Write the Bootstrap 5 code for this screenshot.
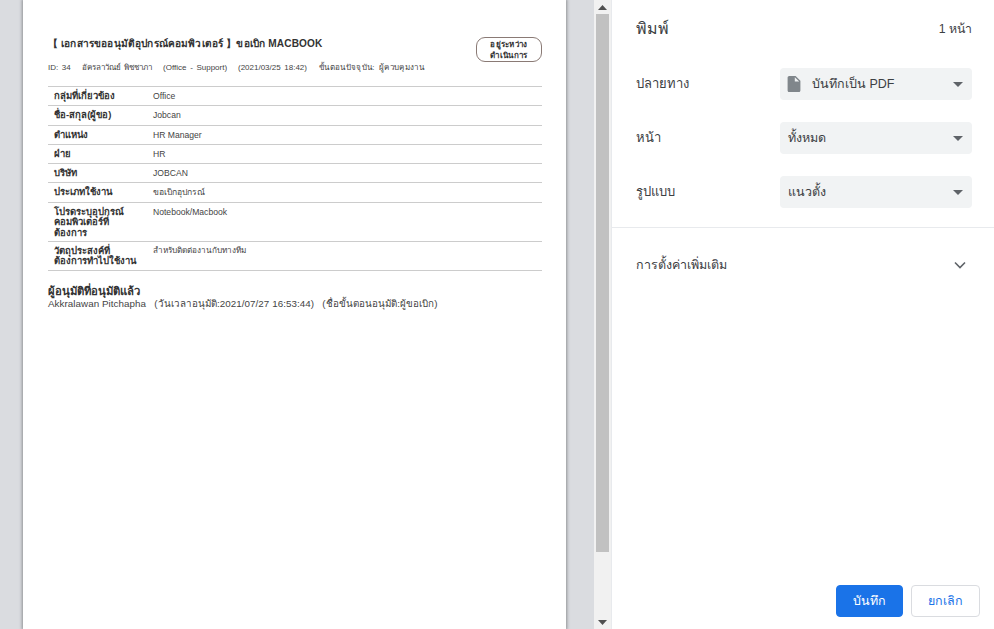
<!DOCTYPE html>
<html lang="th">
<head>
    <meta charset="UTF-8">
    <meta name="viewport" content="width=device-width, initial-scale=1.0">
    <title>Print preview</title>
    <link href="https://cdn.jsdelivr.net/npm/bootstrap@5.3.0/dist/css/bootstrap.min.css" rel="stylesheet">
    <style>
        html, body { height: 629px; overflow: hidden; }
        body { font-family: "Liberation Sans", "Noto Sans", sans-serif; background: #fff; color: #202124; }
        .print-shell { height: 629px; }
        .preview-area { width: 594px; background: #dadce0; padding-left: 23px; }
        .paper { width: 543px; height: 629px; background: #fff; box-shadow: 0 0 3px 1px #8f9094; padding: 33px 24px 0 25px; color: #333; }
        .doc-title { font-size: 10.100px; font-weight: 700; line-height: 14px; margin: 0; letter-spacing: .16px; color: #333; }
        .state-tag { width: 66px; height: 25px; border: 1px solid #8a7a75; border-radius: 9px; font-size: 8px; font-weight: 700; line-height: 11px; text-align: center; padding-top: 1px; letter-spacing: .3px; }
        .doc-meta { font-size: 8px; line-height: 12px; height: 12px; word-spacing: 1.400px; color: #444; }
        .step-now { letter-spacing: .35px; margin-left: 1px; }
        .doc-table { width: 494px; margin: 12px 0 0; border-top: 1px solid #ccc; font-size: 8.600px; color: #444; }
        .doc-table th, .doc-table td { padding: 4px 6px 3px; border-bottom: 1px solid #ccc; line-height: 10.400px; vertical-align: top; height: 19.300px; }
        .doc-table th { width: 99px; font-weight: 700; font-size: 9.500px; color: #333; }
        .note-text { font-size: 8.200px; }
        .approved-title { font-size: 11.300px; font-weight: 700; line-height: 13px; margin: 14px 0 0; color: #333; }
        .approved-line { font-size: 9.800px; line-height: 12px; letter-spacing: .05px; color: #444; }
        .scroll-track { width: 17px; background: #f1f1f1; }
        .scroll-thumb { width: 13px; height: 538px; background: #c1c1c1; margin: 0 auto; }
        .scroll-arrow { height: 14px; }
        .scroll-spacer { height: 63px; }
        .side-panel { width: 383px; border-left: 1px solid #e8eaed; }
        .side-head { padding: 18px 22px 0 24px; height: 68px; }
        .side-head h1 { font-size: 16px; font-weight: 400; line-height: 22px; margin: 0; color: #3c4043; }
        .page-count { font-size: 12.300px; line-height: 22px; color: #3c4043; }
        .opt-row { padding: 0 22px 0 24px; height: 32px; margin-bottom: 22px; font-size: 13px; color: #3c4043; }
        .opt-label { width: 144px; }
        .opt-select { width: 192px; height: 32px; background: #f1f3f4; border-radius: 4px; padding: 0 9px 0 8px; font-size: 12.500px; color: #3c4043; }
        .select-caret { margin-left: auto; width: 0; height: 0; border-left: 5px solid transparent; border-right: 5px solid transparent; border-top: 5px solid #5f6368; }
        .file-icon { margin-right: 11px; margin-left: -1px; }
        .side-rule { border-top: 1px solid #e8eaed; margin: -3px 0 0; height: 0; }
        .more-row { padding: 27px 22px 0 24px; font-size: 12.500px; line-height: 20px; color: #3c4043; }
        .more-chevron { margin-right: 6px; }
        .actions { margin-top: auto; padding: 0 14px 12px 0; }
        .btn-save, .btn-cancel { height: 32px; font-size: 12.500px; font-weight: 500; border-radius: 4px; padding: 0; }
        .btn-save { width: 67px; background: #1a73e8; border: 1px solid #1a73e8; color: #fff; }
        .btn-cancel { width: 69px; background: #fff; border: 1px solid #dadce0; color: #1a73e8; }
    </style>
</head>
<body>
    <div class="print-shell d-flex">
        <div class="preview-area flex-shrink-0">
            <div class="paper">
                <div class="d-flex justify-content-between align-items-start">
                    <h2 class="doc-title pt-1">【 เอกสารขออนุมัติอุปกรณ์คอมพิวเตอร์ 】ขอเบิก MACBOOK</h2>
                    <div class="state-tag mt-1">อยู่ระหว่าง<br>ดำเนินการ</div>
                </div>
                <div class="doc-meta">ID: 34 &nbsp; อัครลาวัณย์ พิชชาภา &nbsp; (Office - Support) &nbsp; (2021/03/25 18:42) &nbsp;&nbsp;<span class="step-now">ขั้นตอนปัจจุบัน: ผู้ควบคุมงาน</span></div>
                <table class="doc-table">
                    <tbody>
                        <tr><th>กลุ่มที่เกี่ยวข้อง</th><td>Office</td></tr>
                        <tr><th>ชื่อ-สกุล(ผู้ขอ)</th><td>Jobcan</td></tr>
                        <tr><th>ตำแหน่ง</th><td>HR Manager</td></tr>
                        <tr><th>ฝ่าย</th><td>HR</td></tr>
                        <tr><th>บริษัท</th><td>JOBCAN</td></tr>
                        <tr><th>ประเภทใช้งาน</th><td>ขอเบิกอุปกรณ์</td></tr>
                        <tr><th>โปรดระบุอุปกรณ์<br>คอมพิวเตอร์ที่<br>ต้องการ</th><td>Notebook/Macbook</td></tr>
                        <tr><th>วัตถุประสงค์ที่<br>ต้องการทำไปใช้งาน</th><td class="note-text">สำหรับติดต่องานกับทางทีม</td></tr>
                    </tbody>
                </table>
                <h3 class="approved-title">ผู้อนุมัติที่อนุมัติแล้ว</h3>
                <div class="approved-line">Akkralawan Pitchapha &nbsp; (วันเวลาอนุมัติ:2021/07/27 16:53:44) &nbsp; (ชื่อขั้นตอนอนุมัติ:ผู้ขอเบิก)</div>
            </div>
        </div>
        <div class="scroll-track flex-shrink-0">
            <div class="scroll-arrow d-flex align-items-center justify-content-center">
                <svg width="9" height="5" viewBox="0 0 9 5"><path d="M4.500 0L9 5H0z" fill="#505050"/></svg>
            </div>
            <div class="scroll-thumb"></div>
            <div class="scroll-spacer"></div>
            <div class="scroll-arrow d-flex align-items-center justify-content-center">
                <svg width="9" height="5" viewBox="0 0 9 5"><path d="M0 0H9L4.500 5z" fill="#505050"/></svg>
            </div>
        </div>
        <div class="side-panel d-flex flex-column flex-grow-1">
            <div class="side-head d-flex justify-content-between">
                <h1>พิมพ์</h1>
                <span class="page-count">1 หน้า</span>
            </div>
            <div class="opt-row d-flex align-items-center">
                <div class="opt-label">ปลายทาง</div>
                <div class="opt-select d-flex align-items-center">
                    <svg class="file-icon" width="14" height="16" viewBox="4 2 16 20"><path d="M6 2c-1.100 0-2 .9-2 2v16c0 1.100.9 2 2 2h12c1.100 0 2-.9 2-2V8l-6-6H6zm7 7V3.500L18.500 9H13z" fill="#80868b"/></svg>
                    <span>บันทึกเป็น PDF</span>
                    <span class="select-caret"></span>
                </div>
            </div>
            <div class="opt-row d-flex align-items-center">
                <div class="opt-label">หน้า</div>
                <div class="opt-select d-flex align-items-center"><span>ทั้งหมด</span><span class="select-caret"></span></div>
            </div>
            <div class="opt-row d-flex align-items-center">
                <div class="opt-label">รูปแบบ</div>
                <div class="opt-select d-flex align-items-center"><span>แนวตั้ง</span><span class="select-caret"></span></div>
            </div>
            <div class="side-rule"></div>
            <div class="more-row d-flex justify-content-between align-items-center">
                <span>การตั้งค่าเพิ่มเติม</span>
                <svg class="more-chevron" width="12" height="8" viewBox="0 0 12 8"><path d="M1 1.500l5 5 5-5" fill="none" stroke="#5f6368" stroke-width="1.600"/></svg>
            </div>
            <div class="actions d-flex justify-content-end gap-2">
                <button class="btn btn-save">บันทึก</button>
                <button class="btn btn-cancel">ยกเลิก</button>
            </div>
        </div>
    </div>
    <script src="https://cdn.jsdelivr.net/npm/bootstrap@5.3.0/dist/js/bootstrap.bundle.min.js"></script>
</body>
</html>
